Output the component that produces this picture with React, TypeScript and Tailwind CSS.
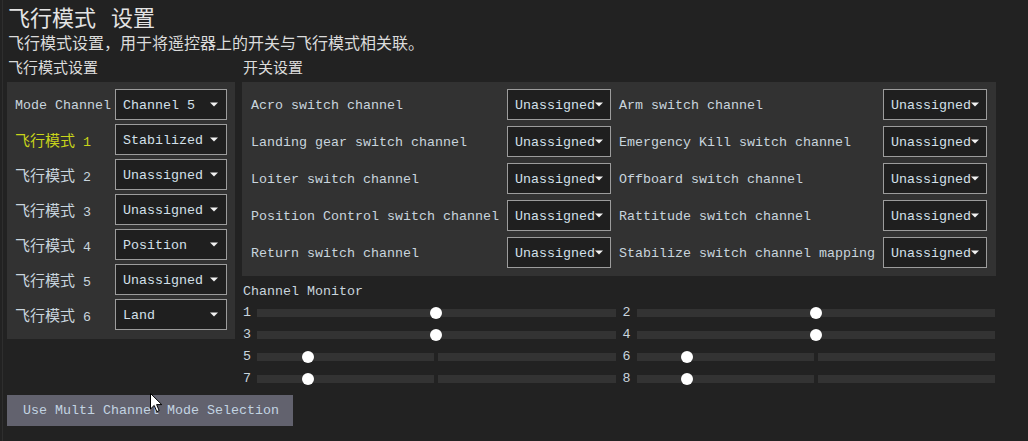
import React from 'react';

const mono = "font-['Liberation_Mono','Noto_Sans_CJK_SC',monospace] text-[13.33px]";
const cjk = "font-['Noto_Sans_CJK_SC',sans-serif]";

function Arrow() {
    return (
        <svg width="8" height="5" viewBox="0 0 8 5" className="shrink-0">
            <path d="M0 0.5 L8 0.5 L4 4.5 Z" fill="#f2f2f2" />
        </svg>
    );
}

function Select({ value, className = '' }: { value: string; className?: string }) {
    return (
        <div className={`h-[31px] flex items-center justify-between pl-[7px] pr-[8px] bg-[#1f1f1f] border border-[#9c9c9c] text-[#d3e0ea] ${className}`}>
            <span className="translate-y-[1px]">{value}</span>
            <Arrow />
        </div>
    );
}

function Track({ pos, split }: { pos: number; split: boolean }) {
    return (
        <div className="relative flex-1 h-[8px] flex gap-[4px]">
            {split ? (
                <>
                    <div className="flex-1 bg-[#333333]" />
                    <div className="flex-1 bg-[#333333]" />
                </>
            ) : (
                <div className="flex-1 bg-[#333333]" />
            )}
            {/* knob */}
            <div
                className="absolute top-1/2 w-[12px] h-[12px] -mt-[6px] -ml-[6px] rounded-full bg-white"
                style={{ left: `${pos}%` }}
            />
        </div>
    );
}

export default function App() {
    const modes = ['Stabilized', 'Unassigned', 'Unassigned', 'Position', 'Unassigned', 'Land'];

    const switches = [
        ['Acro switch channel', 'Arm switch channel'],
        ['Landing gear switch channel', 'Emergency Kill switch channel'],
        ['Loiter switch channel', 'Offboard switch channel'],
        ['Position Control switch channel', 'Rattitude switch channel'],
        ['Return switch channel', 'Stabilize switch channel mapping'],
    ];

    const channels = [
        { n: 1, pos: 50, split: false },
        { n: 2, pos: 50, split: false },
        { n: 3, pos: 50, split: false },
        { n: 4, pos: 50, split: false },
        { n: 5, pos: 14.2, split: true },
        { n: 6, pos: 14.2, split: true },
        { n: 7, pos: 14.2, split: true },
        { n: 8, pos: 14.2, split: true },
    ];

    return (
        <div className={`relative w-full h-[441px] bg-[#222222] overflow-hidden pl-[2px] ${mono}`}>
            <div className="h-full border-l border-[#2e2e2e] pl-[4px]">

                {/* Header */}
                <div className={`h-[32px] flex items-center pl-[1px] text-[22px] text-[#e4e4e4] ${cjk}`}>
                    <span>飞行模式</span>
                    <span className="ml-[15px]">设置</span>
                </div>
                <div className={`h-[20px] leading-[20px] pl-[1px] text-[16px] text-[#dcdcdc] ${cjk}`}>
                    飞行模式设置，用于将遥控器上的开关与飞行模式相关联。
                </div>

                <div className="flex gap-[7px]">

                    {/* Flight modes */}
                    <div className="w-[228px] flex flex-col">
                        <div className={`h-[30px] flex items-center pl-[1px] text-[15px] text-[#dcdcdc] ${cjk}`}>
                            飞行模式设置
                        </div>
                        <div className="bg-[#323232] pt-[7px] pb-[9px] px-[8px] flex flex-col gap-[4px]">
                            <div className="flex items-center justify-between">
                                <span className="text-[#c9d5de] translate-y-[1px]">Mode Channel</span>
                                <Select value="Channel 5" className="w-[112px]" />
                            </div>
                            {modes.map((m, i) => (
                                <div key={i} className="flex items-center justify-between">
                                    <span className={`translate-y-[1px] ${i === 0 ? 'text-[#c8d41a]' : 'text-[#c9d5de]'}`}>
                                        <span className={`text-[15px] ${cjk}`}>飞行模式</span> {i + 1}
                                    </span>
                                    <Select value={m} className="w-[112px]" />
                                </div>
                            ))}
                        </div>
                    </div>

                    {/* Switches + monitor */}
                    <div className="w-[754px] flex flex-col">
                        <div className={`h-[30px] flex items-center pl-[1px] text-[15px] text-[#dcdcdc] ${cjk}`}>
                            开关设置
                        </div>
                        <div className="bg-[#323232] pt-[7px] pb-[8px] pl-[9px] pr-[8px] grid grid-cols-[256px_104px_272px_104px] gap-y-[6px]">
                            {switches.map(([a, b], i) => (
                                <React.Fragment key={i}>
                                    <div className="flex items-center text-[#c9d5de] translate-y-[1px]">{a}</div>
                                    <Select value="Unassigned" className="!pr-[7px] !justify-start gap-0" />
                                    <div className="flex items-center pl-[8px] text-[#c9d5de] translate-y-[1px]">{b}</div>
                                    <Select value="Unassigned" className="!pr-[7px] !justify-start gap-0" />
                                </React.Fragment>
                            ))}
                        </div>

                        <div className="h-[21px] mt-[5px] flex items-center pl-[1px] text-[#c9d5de]">
                            Channel Monitor
                        </div>
                        <div className="grid grid-cols-2 gap-x-[6px] w-[753px]">
                            {channels.map((c) => (
                                <div key={c.n} className="h-[22px] flex items-center">
                                    <span className="w-[15px] pl-[1px] text-[#c9d5de]">{c.n}</span>
                                    <Track pos={c.pos} split={c.split} />
                                </div>
                            ))}
                        </div>
                    </div>
                </div>

                <button className="mt-[5px] h-[31px] w-[286px] bg-[#62626e] text-[#c3d4e2] text-left pl-[16px]">
                    Use Multi Channel Mode Selection
                </button>
            </div>

            {/* mouse cursor */}
            <svg className="absolute left-[150px] top-[393px]" width="13" height="20" viewBox="0 0 13 20">
                <path d="M0.5 0.5 L0.5 16 L4.2 12.4 L6.8 18.6 L9.2 17.6 L6.6 11.6 L11.8 11.6 Z" fill="#ffffff" stroke="#000000" strokeWidth="1" />
            </svg>
        </div>
    );
}
